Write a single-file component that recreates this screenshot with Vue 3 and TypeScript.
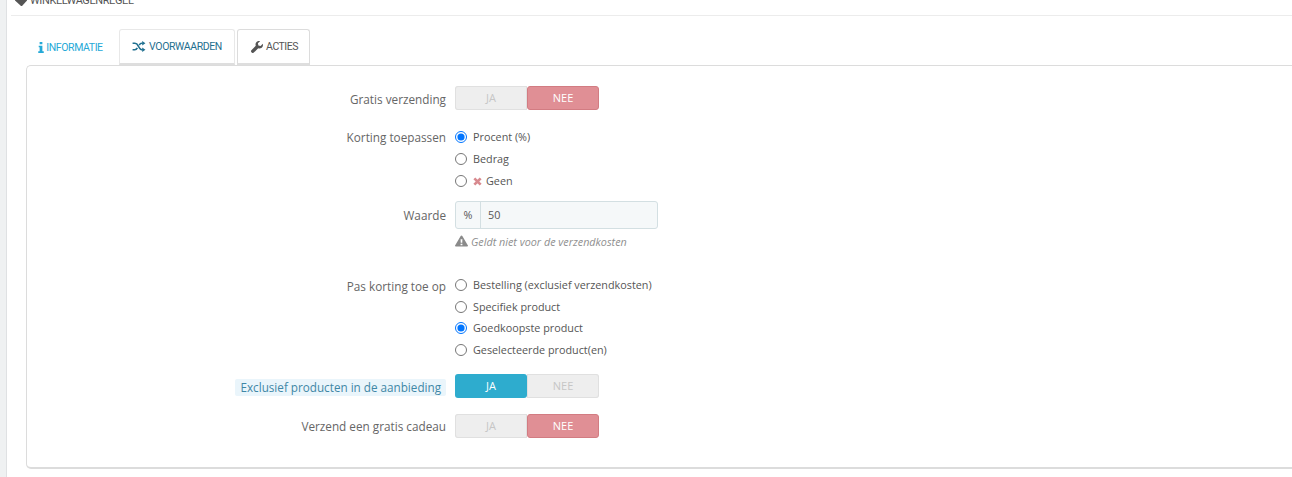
<script setup lang="ts">
interface Opt { label: string; checked?: boolean; cross?: boolean }
const korting: Opt[] = [
  { label: 'Procent (%)', checked: true },
  { label: 'Bedrag' },
  { label: 'Geen', cross: true },
]
const pas: Opt[] = [
  { label: 'Bestelling (exclusief verzendkosten)' },
  { label: 'Specifiek product' },
  { label: 'Goedkoopste product', checked: true },
  { label: 'Geselecteerde product(en)' },
]
</script>

<template>
  <div class="page">
    <aside class="rail"></aside>
    <main class="main">
      <header class="head">
        <svg class="tag" viewBox="0 0 12 12"><path d="M0 4.500 4 .5h4l4 4v1l-5 5.500h-1L0 5.500z" fill="#555" /></svg>
        <span>WINKELWAGENREGEL</span>
      </header>
      <nav class="tabs">
        <div class="tab plain">
          <svg class="ic" viewBox="0 0 6 12"><path d="M1.500 0h3v2.500h-3zM.5 4h4v6.200H6V12H0v-1.800h1.500V5.800H.5z" fill="#25a9d7" /></svg>
          INFORMATIE
        </div>
        <div class="tab active">
          <svg class="ic wide" viewBox="0 0 14 12"><path d="M0 2.500h2.500c2.500 0 3 1.500 4 3.500s1.800 3.500 3.500 3.500h1M0 9.500h2.500c1.300 0 2-.8 2.700-2M7.300 4.500C8 3.200 8.700 2.500 10 2.500h1" fill="none" stroke="#1f6f8f" stroke-width="1.800" /><path d="M10.500 0 14 2.500 10.500 5zM10.500 7 14 9.500 10.500 12z" fill="#1f6f8f" /></svg>
          VOORWAARDEN
        </div>
        <div class="tab boxed">
          <svg class="ic" viewBox="0 0 12 12"><path d="M11.800 2.800 9.600 5 7.400 4.500 6.900 2.300 9.100.2C7.500-.3 5.800.3 5 1.700c-.6 1-.6 2.200-.2 3.100L.4 9.200c-.6.600-.6 1.500 0 2.100l.3.300c.6.600 1.500.6 2.100 0l4.400-4.400c1 .4 2.100.4 3.100-.2 1.400-.8 2-2.600 1.500-4.200z" fill="#555" /></svg>
          ACTIES
        </div>
      </nav>

      <section class="panel">
        <div class="row toggle-row low">
          <label class="lbl">Gratis verzending</label>
          <div class="toggle">
            <span class="half off left">JA</span>
            <span class="half no">NEE</span>
          </div>
        </div>

        <div class="row radios-row first-radios">
          <label class="lbl">Korting toepassen</label>
          <div class="radios">
            <label v-for="o in korting" :key="o.label" class="radio">
              <input type="radio" name="korting" :checked="o.checked" />
              <svg v-if="o.cross" class="cross" viewBox="0 0 10 10"><path d="M1.500 1.500 8.500 8.500M8.500 1.500 1.500 8.500" stroke="#d88a8f" stroke-width="3" /></svg>
              <span class="txt">{{ o.label }}</span>
            </label>
          </div>
        </div>

        <div class="row value-row">
          <label class="lbl">Waarde</label>
          <div class="value">
            <div class="group">
              <span class="addon">%</span>
              <span class="val">50</span>
            </div>
            <p class="help">
              <svg class="warn" viewBox="0 0 14 12"><path fill-rule="evenodd" d="M7 0c.4 0 .7.200.9.500l6 10.300c.4.600-.1 1.200-.8 1.200H.9c-.7 0-1.200-.6-.8-1.200l6-10.300C6.300.2 6.600 0 7 0zM6 4l.2 4h1.600L8 4zm0 5v1.500h2V9z" fill="#8a8a8a" /></svg>
              <em>Geldt niet voor de verzendkosten</em>
            </p>
          </div>
        </div>

        <div class="row radios-row second-radios">
          <label class="lbl second-lbl">Pas korting toe op</label>
          <div class="radios tight">
            <label v-for="o in pas" :key="o.label" class="radio">
              <input type="radio" name="pas" :checked="o.checked" />
              <span class="txt">{{ o.label }}</span>
            </label>
          </div>
        </div>

        <div class="row toggle-row low exclusief">
          <label class="lbl"><span class="hint">Exclusief producten in de aanbieding</span></label>
          <div class="toggle">
            <span class="half yes">JA</span>
            <span class="half off right">NEE</span>
          </div>
        </div>

        <div class="row toggle-row cadeau">
          <label class="lbl">Verzend een gratis cadeau</label>
          <div class="toggle">
            <span class="half off left">JA</span>
            <span class="half no">NEE</span>
          </div>
        </div>
      </section>
    </main>
  </div>
</template>

<style>
html, body { margin: 0; background: #fff; }
</style>

<style scoped>
.page {
  display: flex;
  width: 1292px;
  height: 477px;
  overflow: hidden;
  font-family: "Open Sans", sans-serif;
  font-size: 11px;
  color: #555;
}
.rail {
  flex: 0 0 7px;
  background: #eff1f2;
  border-right: 1px solid #dfe1e3;
  box-sizing: border-box;
}
.main { flex: 1; min-width: 0; padding-left: 4px; }
.head {
  display: flex;
  align-items: flex-start;
  gap: 3px;
  height: 15px;
  border-bottom: 1px solid #ececec;
  padding-left: 4px;
  overflow: hidden;
  font-family: Roboto, sans-serif;
  font-size: 11px;
  line-height: 14px;
  color: #555;
}
.head span { margin-top: -6px; letter-spacing: -0.4px; }
.tag { width: 12px; height: 12px; margin-top: -5px; flex: none; }
.tabs {
  display: flex;
  align-items: flex-start;
  gap: 2px;
  height: 36px;
  margin-top: 13px;
  margin-left: 18px;
  font-family: Roboto, sans-serif;
  font-size: 10.500px;
  letter-spacing: -0.4px;
}
.tab {
  display: flex;
  align-items: center;
  justify-content: center;
  height: 36px;
  box-sizing: border-box;
  gap: 3px;
  border-radius: 3px 3px 0 0;
}
.plain { width: 88px; color: #25a9d7; padding-right: 5px; gap: 2px; }
.active {
  width: 116px;
  color: #1f6f8f;
  border: 1px solid #e8e8e8;
  border-bottom: 2px solid #dedede;
  background: #fff;
}
.boxed {
  width: 73px;
  color: #555;
  border: 1px solid #dcdcdc;
  border-bottom: 2px solid #dedede;
  padding-left: 2px;
  letter-spacing: -0.5px;
}
.ic { width: 6px; height: 11px; }
.ic.wide { width: 14px; height: 11px; }
.boxed .ic { width: 12px; height: 12px; }
.panel {
  box-sizing: border-box;
  margin-left: 15px;
  height: 404px;
  border: 1px solid #dcdcdc;
  border-bottom-width: 2px;
  border-right: 0;
  border-radius: 5px 0 0 5px;
  background: #fff;
  padding-top: 20px;
}
.row { display: flex; align-items: flex-start; }
.toggle-row { height: 24px; }
.lbl {
  flex: 0 0 419px;
  box-sizing: border-box;
  text-align: right;
  font-size: 11.750px;
  color: #666;
  line-height: 24px;
}
.low .lbl { line-height: 26px; height: 24px; }
.toggle {
  display: flex;
  margin-left: 9px;
  width: 144px;
  height: 24px;
  border-radius: 3px;
  font-size: 11px;
  line-height: 24px;
  text-align: center;
}
.half { flex: 0 0 50%; box-sizing: border-box; }
.off { background: #eee; color: #c6c6c6; box-shadow: inset 0 0 0 1px #e0e0e0; }
.off.left { border-radius: 3px 0 0 3px; }
.off.right { border-radius: 0 3px 3px 0; }
.no { background: #e08f95; color: #fff; border: 1px solid #d27c82; border-radius: 3px; line-height: 22px; }
.yes { background: #2eacce; color: #fff; border-radius: 3px; }
.radios-row .lbl { line-height: 20px; }
.radios-row .second-lbl { line-height: 22px; }
.first-radios { margin-top: 17px; }
.radios { display: flex; flex-direction: column; gap: 2px; margin-left: 9px; }
.radios.tight { gap: 1.700px; }
.radio {
  display: flex;
  align-items: center;
  height: 20px;
  font-size: 10.800px;
  color: #555;
}
.radio input {
  width: 12px;
  height: 12px;
  margin: 0 6px 0 0;
  flex: none;
}
.txt { padding-bottom: 2px; }
.tight .txt { padding-bottom: 1px; }
.cross { width: 9px; height: 9px; margin-right: 4px; }
.value-row { margin-top: 10px; }
.value-row .lbl { line-height: 28px; }
.value { margin-left: 9px; }
.group {
  display: flex;
  width: 203px;
  height: 28px;
  box-sizing: border-box;
  border: 1px solid #d3dfe2;
  border-radius: 3px;
  background: #f5f8f9;
  line-height: 26px;
  font-size: 10.800px;
}
.addon {
  flex: 0 0 24px;
  text-align: center;
  border-right: 1px solid #d3dfe2;
}
.val { padding-left: 7px; }
.help {
  display: flex;
  align-items: center;
  gap: 3px;
  margin: 4px 0 0;
  height: 16px;
  font-size: 10.800px;
  color: #8f8f8f;
}
.warn { width: 13px; height: 12px; }
.second-radios { margin-top: 26px; }
.exclusief { margin-top: 14px; }
.hint {
  display: inline-block;
  line-height: 17px;
  padding: 0 5px;
  font-size: 11.700px;
  background: #eaf5fb;
  color: #3f87a6;
  border-radius: 2px;
}
.cadeau { margin-top: 16px; }
</style>
